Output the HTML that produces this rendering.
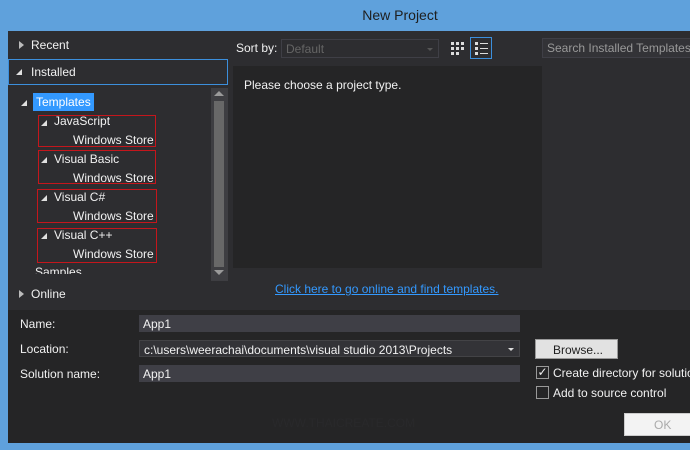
<!DOCTYPE html>
<html><head><style>
*{margin:0;padding:0;box-sizing:border-box}
body{width:690px;height:450px;overflow:hidden;background:#5fa1dc;font-family:"Liberation Sans",sans-serif;font-size:12px;color:#f1f1f1;position:relative}
.a{position:absolute;white-space:nowrap}
.tri{position:absolute;width:0;height:0;border-left:6px solid transparent;border-bottom:6px solid #e0e0e0}
.rt{position:absolute;width:0;height:0;border-top:4px solid transparent;border-bottom:4px solid transparent;border-left:5px solid #bbb}
.box{position:absolute;border:1px solid #c4161c;width:118px;height:32px}
.inp{position:absolute;background:#3f3f46;height:17px;padding:2px 4px;font-size:12px}
</style></head><body>
<div class="a" style="left:0;top:0;width:690px;height:31px;text-align:center;line-height:31px;font-size:14px;color:#1e1e1e;padding-left:110px">New Project</div>
<div class="a" style="left:8px;top:31px;width:682px;height:279px;background:#2d2d30"></div>
<div class="a" style="left:8px;top:310px;width:682px;height:133px;background:#252526"></div>
<div class="rt" style="left:19px;top:41px"></div>
<div class="a" style="left:31px;top:38px">Recent</div>
<div class="a" style="left:8px;top:59px;width:220px;height:26px;border:1px solid #3c8fdc;background:#2d2d30"></div>
<div class="tri" style="left:16px;top:69px"></div>
<div class="a" style="left:31px;top:65px">Installed</div>
<div class="tri" style="left:21px;top:100px"></div>
<div class="a" style="left:33px;top:93px;background:#3399ff;color:#fff;padding:2px 3px;height:18px">Templates</div>
<div class="box" style="left:38px;top:115px"></div>
<div class="tri" style="left:41px;top:120px"></div><div class="a" style="left:54px;top:114px">JavaScript</div><div class="a" style="left:73px;top:133px">Windows Store</div>
<div class="box" style="left:38px;top:150px;height:34px"></div>
<div class="tri" style="left:41px;top:157px"></div><div class="a" style="left:54px;top:152px">Visual Basic</div><div class="a" style="left:73px;top:171px">Windows Store</div>
<div class="box" style="left:37px;top:189px;height:34px;width:120px"></div>
<div class="tri" style="left:41px;top:195px"></div><div class="a" style="left:54px;top:190px">Visual C#</div><div class="a" style="left:73px;top:209px">Windows Store</div>
<div class="box" style="left:37px;top:228px;height:35px;width:120px"></div>
<div class="tri" style="left:41px;top:233px"></div><div class="a" style="left:54px;top:228px">Visual C++</div><div class="a" style="left:73px;top:247px">Windows Store</div>
<div class="a" style="left:35px;top:265px;height:9px;overflow:hidden;line-height:14px">Samples</div>
<div class="a" style="left:211px;top:88px;width:17px;height:193px;background:#3e3e42"></div>
<div class="a" style="left:214px;top:101px;width:10px;height:166px;background:#686868"></div>
<div class="a" style="left:214px;top:91px;border-left:5px solid transparent;border-right:5px solid transparent;border-bottom:5px solid #999"></div>
<div class="a" style="left:214px;top:270px;border-left:5px solid transparent;border-right:5px solid transparent;border-top:5px solid #999"></div>
<div class="rt" style="left:19px;top:290px"></div>
<div class="a" style="left:31px;top:287px">Online</div>
<div class="a" style="left:236px;top:41px">Sort by:</div>
<div class="a" style="left:281px;top:39px;width:158px;height:19px;border:1px solid #3f3f46;color:#656565;padding:2px 4px">Default<span style="position:absolute;right:5px;top:8px;border-left:3px solid transparent;border-right:3px solid transparent;border-top:3px solid #555"></span></div>
<svg class="a" style="left:448px;top:39px" width="20" height="20"><g fill="#ddd"><rect x="3" y="3" width="3" height="3"/><rect x="8" y="3" width="3" height="3"/><rect x="13" y="3" width="3" height="3"/><rect x="3" y="8" width="3" height="3"/><rect x="8" y="8" width="3" height="3"/><rect x="13" y="8" width="3" height="3"/><rect x="3" y="13" width="3" height="3"/><rect x="8" y="13" width="3" height="3"/></g></svg>
<div class="a" style="left:470px;top:37px;width:22px;height:22px;border:1px solid #3c8fdc"></div>
<svg class="a" style="left:472px;top:39px" width="18" height="18"><g fill="#ddd"><rect x="3" y="3" width="3" height="3"/><rect x="8" y="4" width="8" height="1"/><rect x="3" y="8" width="3" height="3"/><rect x="8" y="9" width="8" height="1"/><rect x="3" y="13" width="3" height="3"/><rect x="8" y="14" width="8" height="1"/></g></svg>
<div class="a" style="left:233px;top:66px;width:309px;height:202px;background:#252526"></div>
<div class="a" style="left:244px;top:78px">Please choose a project type.</div>
<div class="a" style="left:275px;top:282px;color:#3399ff;text-decoration:underline">Click here to go online and find templates.</div>
<div class="a" style="left:542px;top:38px;width:150px;height:20px;border:1px solid #3f3f46;background:#333337;color:#999;padding:2px 4px">Search Installed Templates</div>
<div class="a" style="left:20px;top:317px">Name:</div>
<div class="a" style="left:20px;top:342px">Location:</div>
<div class="a" style="left:20px;top:367px">Solution name:</div>
<div class="inp" style="left:139px;top:315px;width:381px">App1</div>
<div class="inp" style="left:139px;top:340px;width:381px;border:1px solid #434346;background:#333337">c:\users\weerachai\documents\visual studio 2013\Projects<span style="position:absolute;right:5px;top:7px;border-left:3px solid transparent;border-right:3px solid transparent;border-top:3px solid #ddd"></span></div>
<div class="inp" style="left:139px;top:365px;width:381px">App1</div>
<div class="a" style="left:535px;top:339px;width:83px;height:20px;background:#e2e2e2;color:#1e1e1e;border:1px solid #999;padding:3px 0 0 17px">Browse...</div>
<div class="a" style="left:536px;top:366px;width:13px;height:13px;border:1px solid #999;color:#eee;font-size:12px;line-height:11px;text-align:center">✓</div>
<div class="a" style="left:553px;top:366px">Create directory for solution</div>
<div class="a" style="left:536px;top:386px;width:13px;height:13px;border:1px solid #999"></div>
<div class="a" style="left:553px;top:386px">Add to source control</div>
<div class="a" style="left:272px;top:416px;color:#29292b;font-size:12px">WWW.THAICREATE.COM</div>
<div class="a" style="left:624px;top:413px;width:70px;height:23px;background:#f3f3f3;border:1px solid #ccc;color:#aaa;padding:4px 0 0 29px">OK</div>
<div class="a" style="left:0;top:443px;width:690px;height:7px;background:#5fa1dc"></div>
</body></html>
